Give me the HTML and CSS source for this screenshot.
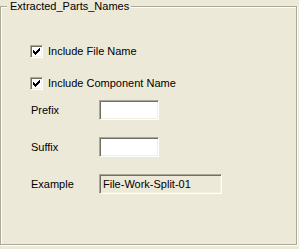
FILE: index.html
```html
<!DOCTYPE html>
<html>
<head>
<meta charset="utf-8">
<link rel="stylesheet" href="styles.css">
</head>
<body>
<div class="group">
  <div class="legend">Extracted_Parts_Names</div>
  <div class="content">
    <div class="cb-row">
      <span class="cb"><svg width="7" height="7" viewBox="0 0 7 7" shape-rendering="crispEdges"><path d="M0 2h1v3H0zM1 3h1v3H1zM2 4h1v3H2zM3 3h1v3H3zM4 2h1v3H4zM5 1h1v3H5zM6 0h1v3H6z" fill="#000"/></svg></span>
      <span class="cb-label">Include File Name</span>
    </div>
    <div class="cb-row row2">
      <span class="cb"><svg width="7" height="7" viewBox="0 0 7 7" shape-rendering="crispEdges"><path d="M0 2h1v3H0zM1 3h1v3H1zM2 4h1v3H2zM3 3h1v3H3zM4 2h1v3H4zM5 1h1v3H5zM6 0h1v3H6z" fill="#000"/></svg></span>
      <span class="cb-label">Include Component Name</span>
    </div>
    <div class="field-row first">
      <span class="f-label">Prefix</span>
      <span class="edit"></span>
    </div>
    <div class="field-row">
      <span class="f-label">Suffix</span>
      <span class="edit"></span>
    </div>
    <div class="field-row">
      <span class="f-label">Example</span>
      <span class="edit readonly">File-Work-Split-01</span>
    </div>
  </div>
</div>
</body>
</html>
```
FILE: styles.css
```css
html, body {
  margin: 0;
  padding: 0;
  background: #ece9d8;
}
body {
  width: 299px;
  height: 249px;
  overflow: hidden;
  font-family: "Liberation Sans", Arial, sans-serif;
  font-size: 11px;
  color: #000;
}
.group {
  position: relative;
  margin-top: 6px;
  width: 295px;
  height: 237px;
  border: 1px solid #aca899;
  box-shadow: inset 1px 1px 0 #fff, 1px 1px 0 #fff;
}
.legend {
  position: absolute;
  left: 6px;
  top: -7px;
  padding: 0 2px 0 3px;
  line-height: 13px;
  background: #ece9d8;
}
.content {
  padding: 38px 0 0 29px;
  display: flex;
  flex-direction: column;
}
.cb-row {
  display: flex;
  align-items: center;
  height: 13px;
}
.row2 {
  margin-top: 19px;
}
.cb {
  box-sizing: border-box;
  width: 13px;
  height: 13px;
  border: 1px solid;
  border-color: #aca899 #fff #fff #aca899;
  box-shadow: inset 1px 1px 0 #716f64, inset -1px -1px 0 #f1efe2;
  background: #fff;
  display: flex;
  align-items: center;
  justify-content: center;
}
.cb svg {
  display: block;
}
.cb-label {
  margin-left: 5px;
  line-height: 13px;
}
.field-row {
  display: flex;
  align-items: center;
  height: 20px;
  margin-top: 17px;
}
.field-row.first {
  margin-top: 10px;
}
.f-label {
  width: 69px;
  padding-left: 1px;
  box-sizing: border-box;
}
.edit {
  box-sizing: border-box;
  width: 60px;
  height: 20px;
  border: 1px solid;
  border-color: #aca899 #fff #fff #aca899;
  box-shadow: inset 1px 1px 0 #716f64, inset -1px -1px 0 #f1efe2;
  background: #fff;
  padding: 0 0 0 3px;
  line-height: 18px;
}
.edit.readonly {
  width: 123px;
  background: #ece9d8;
}
```
